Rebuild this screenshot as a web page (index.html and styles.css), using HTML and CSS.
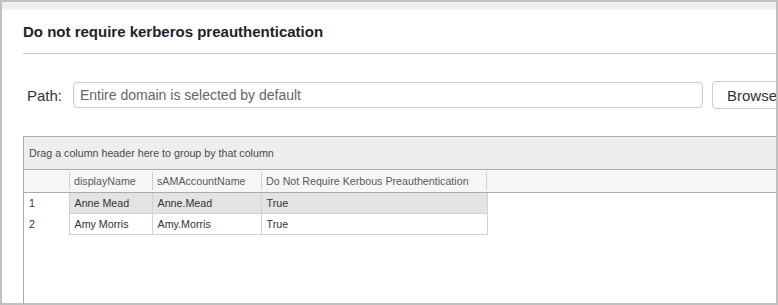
FILE: index.html
```html
<!DOCTYPE html>
<html>
  <head>
    <link rel="stylesheet" href="styles.css">
  </head>
  <body>
    <div class="frame">
      <div class="topbar"></div>

      <div class="heading">
        <h1>Do not require kerberos preauthentication</h1>
      </div>

      <div class="path-row">
        <label for="path">Path:</label>
        <input type="text" id="path" placeholder="Entire domain is selected by default" />
        <button class="browse">Browse</button>
      </div>

      <div class="grid">
        <div class="group-panel">Drag a column header here to group by that column</div>
        <table class="results">
          <thead>
            <tr>
              <th class="indicator"></th>
              <th class="col-name"><span>displayName</span></th>
              <th class="col-account"><span>sAMAccountName</span></th>
              <th class="col-flag"><span>Do Not Require Kerbous Preauthentication</span></th>
              <th class="filler"></th>
            </tr>
          </thead>
          <tbody>
            <tr class="selected">
              <td class="indicator">1</td>
              <td>Anne Mead</td>
              <td>Anne.Mead</td>
              <td>True</td>
              <td class="filler"></td>
            </tr>
            <tr>
              <td class="indicator">2</td>
              <td>Amy Morris</td>
              <td>Amy.Morris</td>
              <td>True</td>
              <td class="filler"></td>
            </tr>
          </tbody>
        </table>
      </div>
    </div>
  </body>
</html>
```

FILE: styles.css
```css
body {
  margin: 0;
  padding: 0;
  background-color: white;
  font-family: "Liberation Sans", Arial, sans-serif;
}

.frame {
  width: 778px;
  height: 305px;
  box-sizing: border-box;
  border: 2px solid #c0c0c0;
  overflow: hidden;
  display: flex;
  flex-direction: column;
}

.topbar {
  height: 8px;
  background: linear-gradient(#f3f3f3, #ececec 60%, #f7f7f7);
}

.heading {
  margin-left: 21px;
  height: 44px;
  border-bottom: 1px solid #c4c4c4;
  box-sizing: border-box;
  display: flex;
  align-items: center;
}

h1 {
  margin: 0;
  font-size: 15px;
  font-weight: bold;
  color: #1e222b;
  padding-top: 0;
}

.path-row {
  display: flex;
  align-items: center;
  margin-top: 27px;
  padding-left: 25px;
}

.path-row label {
  font-size: 15px;
  color: #333;
  width: 46px;
  flex-shrink: 0;
}

.path-row input {
  width: 630px;
  height: 26px;
  flex-shrink: 0;
  box-sizing: border-box;
  border: 1px solid #ccc;
  border-radius: 4px;
  padding: 0 6px;
  font-family: "Liberation Sans", Arial, sans-serif;
  font-size: 14px;
  color: #555;
}

.path-row input::placeholder {
  color: #666;
}

.browse {
  margin-left: 9px;
  height: 28px;
  width: 80px;
  flex-shrink: 0;
  box-sizing: border-box;
  border: 1px solid #ccc;
  border-radius: 4px;
  background-color: white;
  padding: 0 0 0 14px;
  text-align: left;
  font-family: "Liberation Sans", Arial, sans-serif;
  font-size: 15px;
  color: #333;
}

.grid {
  flex: 1;
  margin-top: 27px;
  margin-left: 21px;
  border-top: 1px solid #ababab;
  border-left: 1px solid #ababab;
  font-size: 10.7px;
}

.group-panel {
  height: 32px;
  line-height: 33px;
  padding-left: 5px;
  background-color: #eeeeee;
  color: #4a4a4a;
  border-bottom: 1px solid #ababab;
}

.results {
  border-collapse: collapse;
  width: 100%;
  table-layout: fixed;
}

.results th {
  height: 22px;
  padding: 0;
  background-color: #f6f6f6;
  border-bottom: 1px solid #ababab;
  font-weight: normal;
  text-align: left;
  color: #5a5a5a;
}

.results th span {
  display: block;
  height: 18px;
  line-height: 18px;
  padding-left: 4px;
  border-left: 1px solid #cfcfcf;
}

.results th.col-flag span {
  border-right: 1px solid #cfcfcf;
}

.results .indicator {
  width: 45px;
}

.results .col-name {
  width: 83px;
}

.results .col-account {
  width: 109px;
}

.results .col-flag {
  width: 226px;
}

.results td {
  height: 20px;
  padding: 0 0 0 5px;
  border: 1px solid #d2d2d2;
  color: #333;
  white-space: nowrap;
}

.results td.indicator {
  border: none;
  padding-left: 5px;
  color: #333;
}

.results td.filler {
  border: none;
}

.results tr.selected td {
  background-color: #e3e3e3;
}

.results tr.selected td.indicator,
.results tr.selected td.filler {
  background-color: white;
}
```
